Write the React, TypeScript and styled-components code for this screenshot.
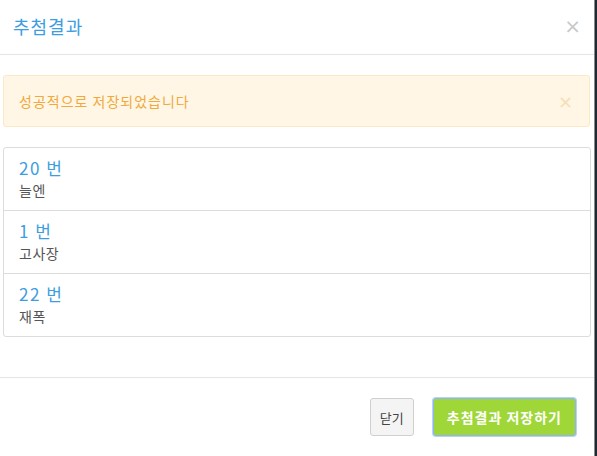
import * as React from 'react';
import styled, { createGlobalStyle } from 'styled-components';

const GlobalStyle = createGlobalStyle`
	html, body {
		margin: 0;
		padding: 0;
		background: #1d2a35;
	}
	body {
		font-family: "Noto Sans CJK KR", "Noto Sans", sans-serif;
		font-size: 13px;
		color: #333;
	}
`;

const results = [
	{ no: 20, name: '늘엔' },
	{ no: 1, name: '고사장' },
	{ no: 22, name: '재폭' },
];

export default function App() {
	return (
		<>
			<GlobalStyle />
			<Modal>
				<Header>
					<Title>추첨결과</Title>
					<Close>×</Close>
				</Header>
				<Body>
					<Alert>
						<span>성공적으로 저장되었습니다</span>
						<AlertClose>×</AlertClose>
					</Alert>
					<List>
						{results.map(r => (
							<Item key={r.no}>
								<ItemNo>{r.no} 번</ItemNo>
								<ItemName>{r.name}</ItemName>
							</Item>
						))}
					</List>
				</Body>
				<Footer>
					<Button>닫기</Button>
					<Button primary>추첨결과 저장하기</Button>
				</Footer>
			</Modal>
		</>
	);
}

// STYLE
const Modal = styled.div`
	width: 594px;
	height: 456px;
	background: #fff;
	border-right: 1px solid #8a8a8a;
	display: flex;
	flex-direction: column;
	overflow: hidden;
`;

const Header = styled.div`
	height: 55px;
	box-sizing: border-box;
	display: flex;
	align-items: center;
	justify-content: space-between;
	padding: 0 13px 2px 13px;
	border-bottom: 1px solid #e5e5e5;
`;

const Title = styled.h4`
	margin: 0;
	font-size: 18px;
	font-weight: 400;
	letter-spacing: 1px;
	color: #3d9ddf;
`;

const Close = styled.span`
	font-size: 20px;
	line-height: 1;
	color: #c8c8c8;
	font-family: "DejaVu Sans", sans-serif;
`;

const Body = styled.div`
	flex: 1;
	display: flex;
	flex-direction: column;
	gap: 20px;
	padding: 20px 3px 0 3px;
`;

const Alert = styled.div`
	height: 52px;
	margin-right: 1px;
	box-sizing: border-box;
	display: flex;
	align-items: center;
	justify-content: space-between;
	padding: 0 15px 0 15px;
	background: #fff6e6;
	border: 1px solid #fbe9c6;
	border-radius: 3px;
	color: #f0a93a;
	font-size: 14px;
	letter-spacing: 1px;
`;

const AlertClose = styled.span`
	font-size: 18px;
	color: #f7ddb3;
	font-family: "DejaVu Sans", sans-serif;
`;

const List = styled.div`
	border: 1px solid #dcdcdc;
	border-radius: 3px;
`;

const Item = styled.div`
	height: 63px;
	box-sizing: border-box;
	padding: 9px 15px 0;
	border-top: 1px solid #dcdcdc;

	&:first-child {
		border-top: none;
		height: 62px;
	}
`;

const ItemNo = styled.div`
	font-size: 17px;
	line-height: 22px;
	letter-spacing: 1.5px;
	color: #3d9ddf;
`;

const ItemName = styled.div`
	margin-top: 2px;
	font-size: 14px;
	line-height: 18px;
	letter-spacing: 0.5px;
	color: #555;
`;

const Footer = styled.div`
	height: 79px;
	box-sizing: border-box;
	display: flex;
	justify-content: flex-end;
	align-items: flex-start;
	gap: 19px;
	padding: 20px 18px 0;
	border-top: 1px solid #e5e5e5;
`;

const Button = styled.button<{ primary?: boolean }>`
	height: 38px;
	padding: 0 ${p => (p.primary ? 13 : 9)}px;
	font-family: inherit;
	font-size: ${p => (p.primary ? 14 : 13)}px;
	letter-spacing: ${p => (p.primary ? 1 : 0)}px;
	font-weight: ${p => (p.primary ? 700 : 400)};
	border-radius: 3px;
	color: ${p => (p.primary ? '#fff' : '#444')};
	background: ${p => (p.primary ? '#9fd738' : '#f4f4f4')};
	border: 1px solid ${p => (p.primary ? '#8fb5f0' : '#cfcfcf')};
	box-shadow: ${p => (p.primary ? '0 0 0 1px #b9d2f6' : 'none')};
`;
